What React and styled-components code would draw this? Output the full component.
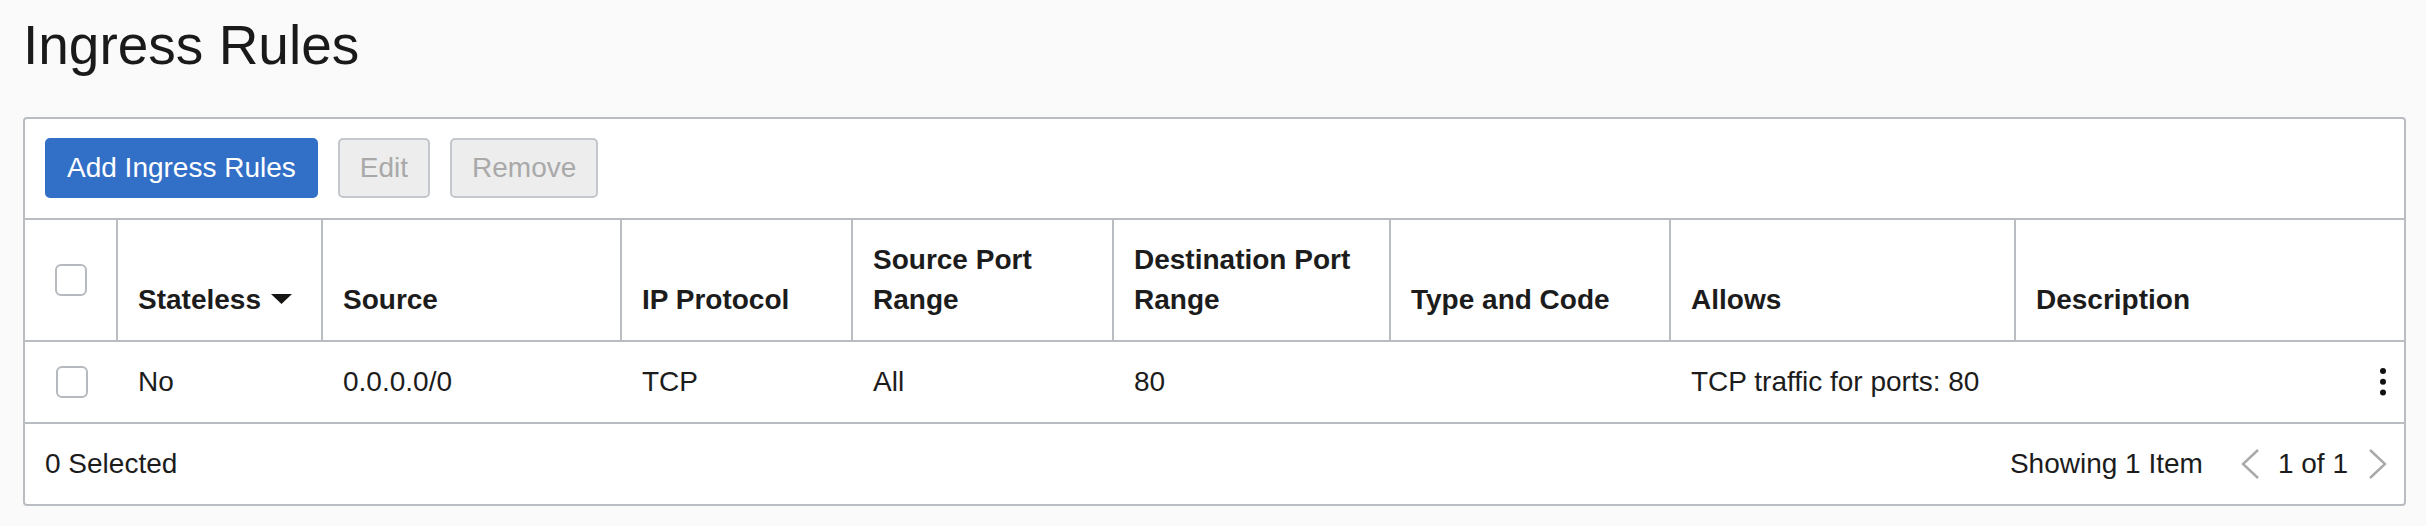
import React from 'react';
import styled, { createGlobalStyle } from 'styled-components';

const COLS = '93px 205px 299px 231px 261px 277px 280px 345px 1fr';
const LINE = '#b9bcc1';

const GlobalStyle = createGlobalStyle`
  html, body {
    margin: 0;
    background: #fafafa;
  }
  body {
    font-family: "Liberation Sans", Arial, Helvetica, sans-serif;
    color: #1c1c1c;
    font-size: 28px;
  }
`;

const Page = styled.div`
  padding: 15px 20px 22px 23px;
`;

const Title = styled.h1`
  margin: 0 0 42px 0;
  font-size: 55px;
  font-weight: 400;
  line-height: 60px;
  color: #1a1a1a;
`;

const Panel = styled.div`
  background: #fff;
  border: 2px solid ${LINE};
  border-radius: 4px;
  overflow: hidden;
`;

const Toolbar = styled.div`
  display: flex;
  gap: 20px;
  padding: 19px 20px 20px;
  border-bottom: 2px solid ${LINE};
`;

const Button = styled.button`
  height: 60px;
  padding: 0 20px;
  border-radius: 5px;
  font-family: inherit;
  font-size: 28px;
  line-height: 40px;
  border: 2px solid ${(p) => (p.$primary ? '#3270c8' : '#c4c7cb')};
  background: ${(p) => (p.$primary ? '#3270c8' : '#ededed')};
  color: ${(p) => (p.$primary ? '#ffffff' : '#a9a9a9')};
  cursor: ${(p) => (p.disabled ? 'default' : 'pointer')};
`;

const HeaderRow = styled.div`
  display: grid;
  grid-template-columns: ${COLS};
  border-bottom: 2px solid ${LINE};
`;

const HeadCell = styled.div`
  display: flex;
  align-items: ${(p) => (p.$center ? 'center' : 'flex-end')};
  justify-content: ${(p) => (p.$center ? 'center' : 'flex-start')};
  padding: 20px;
  font-weight: 700;
  line-height: 40px;
  min-height: 80px;
  border-right: 2px solid ${LINE};
  &:last-child {
    border-right: none;
  }
`;

const SortArrow = styled.svg`
  margin-left: 10px;
  vertical-align: 5px;
`;

const Row = styled.div`
  display: grid;
  grid-template-columns: ${COLS};
  height: 80px;
  border-bottom: 2px solid ${LINE};
`;

const Cell = styled.div`
  display: flex;
  align-items: center;
  justify-content: ${(p) => p.$justify || 'flex-start'};
  padding: ${(p) => p.$pad || '0 20px'};
  line-height: 40px;
  white-space: nowrap;
`;

const Checkbox = styled.span`
  display: block;
  width: 32px;
  height: 32px;
  box-sizing: border-box;
  border: 2px solid #b6b9be;
  border-radius: 6px;
  background: #fff;
`;

const Footer = styled.div`
  display: flex;
  align-items: center;
  justify-content: space-between;
  height: 80px;
  padding: 0 17px 0 20px;
  line-height: 40px;
`;

const Pager = styled.div`
  display: flex;
  align-items: center;
`;

const Count = styled.span`
  margin-right: 38px;
`;

const PageNum = styled.span`
  margin: 0 20px 0 18px;
`;

function Chevron({ dir }) {
  const pts = dir === 'left' ? '17,1 2,15 17,29' : '2,1 17,15 2,29';
  return (
    <svg width="19" height="30" viewBox="0 0 19 30">
      <polyline points={pts} fill="none" stroke="#a9a9a9" strokeWidth="2.4" />
    </svg>
  );
}

function Kebab() {
  return (
    <svg width="6" height="28" viewBox="0 0 6 28">
      <circle cx="3" cy="3" r="3" fill="#111" />
      <circle cx="3" cy="13.7" r="3" fill="#111" />
      <circle cx="3" cy="24.4" r="3" fill="#111" />
    </svg>
  );
}

const rules = [
  {
    stateless: 'No',
    source: '0.0.0.0/0',
    protocol: 'TCP',
    sourcePort: 'All',
    destPort: '80',
    typeCode: '',
    allows: 'TCP traffic for ports: 80',
    description: '',
  },
];

export default function App() {
  return (
    <>
      <GlobalStyle />
      <Page>
        <Title>Ingress Rules</Title>
        <Panel>
          <Toolbar>
            <Button $primary>Add Ingress Rules</Button>
            <Button disabled>Edit</Button>
            <Button disabled>Remove</Button>
          </Toolbar>
          <HeaderRow>
            <HeadCell $center>
              <Checkbox />
            </HeadCell>
            <HeadCell>
              <span>
                Stateless
                <SortArrow width="21" height="10" viewBox="0 0 21 10">
                  <polygon points="0,0 21,0 10.5,10" fill="#161513" />
                </SortArrow>
              </span>
            </HeadCell>
            <HeadCell>Source</HeadCell>
            <HeadCell>IP Protocol</HeadCell>
            <HeadCell>
              <span>
                Source Port
                <br />
                Range
              </span>
            </HeadCell>
            <HeadCell>
              <span>
                Destination Port
                <br />
                Range
              </span>
            </HeadCell>
            <HeadCell>Type and Code</HeadCell>
            <HeadCell>Allows</HeadCell>
            <HeadCell>Description</HeadCell>
          </HeaderRow>
          {rules.map((r, i) => (
            <Row key={i}>
              <Cell $justify="center" $pad="0">
                <Checkbox />
              </Cell>
              <Cell>{r.stateless}</Cell>
              <Cell>{r.source}</Cell>
              <Cell>{r.protocol}</Cell>
              <Cell>{r.sourcePort}</Cell>
              <Cell>{r.destPort}</Cell>
              <Cell>{r.typeCode}</Cell>
              <Cell>{r.allows}</Cell>
              <Cell $justify="space-between" $pad="0 18px 0 20px">
                <span>{r.description}</span>
                <Kebab />
              </Cell>
            </Row>
          ))}
          <Footer>
            <span>0 Selected</span>
            <Pager>
              <Count>Showing 1 Item</Count>
              <Chevron dir="left" />
              <PageNum>1 of 1</PageNum>
              <Chevron dir="right" />
            </Pager>
          </Footer>
        </Panel>
      </Page>
    </>
  );
}
